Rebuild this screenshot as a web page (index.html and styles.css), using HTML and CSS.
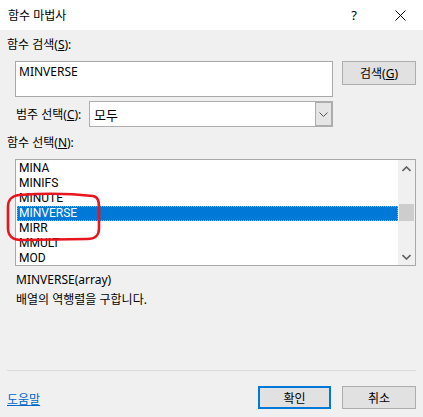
FILE: index.html
```html
<!DOCTYPE html>
<html lang="ko">
<head>
<meta charset="utf-8">
<link rel="stylesheet" href="styles.css">
</head>
<body>
<div class="dialog">
  <div class="titlebar">
    <span class="title">함수 마법사</span>
    <span class="tbtn help">?</span>
    <span class="tbtn close">
      <svg width="11" height="11" viewBox="0 0 11 11"><path d="M0.5 0.5 L10.5 10.5 M10.5 0.5 L0.5 10.5" stroke="#000" stroke-width="1" fill="none"/></svg>
    </span>
  </div>
  <div class="content">
    <div class="label">함수 검색(<u>S</u>):</div>
    <div class="search-row">
      <div class="textbox">MINVERSE</div>
      <div class="btn search-btn">검색(<u>G</u>)</div>
    </div>
    <div class="cat-row">
      <span class="cat-label">범주 선택(<u>C</u>):</span>
      <div class="combo">
        <span class="combo-text">모두</span>
        <span class="combo-btn">
          <svg width="9" height="5" viewBox="0 0 9 5"><path d="M0.5 0.5 L4.5 4.5 L8.5 0.5" stroke="#555" stroke-width="1" fill="none"/></svg>
        </span>
      </div>
    </div>
    <div class="label label-list">함수 선택(<u>N</u>):</div>
    <div class="listbox">
      <div class="items">
        <div class="item">MINA</div>
        <div class="item">MINIFS</div>
        <div class="item">MINUTE</div>
        <div class="item selected">MINVERSE</div>
        <div class="item">MIRR</div>
        <div class="item">MMULT</div>
        <div class="item">MOD</div>
      </div>
      <div class="scrollbar">
        <span class="arrow">
          <svg width="9" height="6" viewBox="0 0 9 6"><path d="M0.5 5 L4.5 1 L8.5 5" stroke="#606060" stroke-width="1.6" fill="none"/></svg>
        </span>
        <span class="track"><span class="thumb"></span></span>
        <span class="arrow">
          <svg width="9" height="6" viewBox="0 0 9 6"><path d="M0.5 1 L4.5 5 L8.5 1" stroke="#606060" stroke-width="1.6" fill="none"/></svg>
        </span>
      </div>
    </div>
    <div class="desc">
      <div class="desc-line">MINVERSE(array)</div>
      <div class="desc-line">배열의 역행렬을 구합니다.</div>
    </div>
    <div class="separator"></div>
    <div class="footer">
      <a class="help-link">도움말</a>
      <div class="btn ok-btn">확인</div>
      <div class="btn cancel-btn">취소</div>
    </div>
  </div>
  <svg class="annotation" width="97" height="51" viewBox="0 0 97 51">
    <path d="M14 3 C40 1 70 2 88 4 C93 5 94 9 94 16 L94 36 C94 44 90 47 82 47 L16 48 C8 48 3 44 3 36 L3 15 C3 7 7 4 14 3 Z" stroke="#e8151f" stroke-width="2.6" fill="none"/>
  </svg>
</div>
</body>
</html>
```

FILE: styles.css
```css
* { box-sizing: border-box; }
html, body { margin: 0; padding: 0; }
body {
  background: #f0f0f0;
  font-family: "Noto Sans", "Noto Sans CJK KR", sans-serif;
  font-size: 12px;
  color: #000;
}
.dialog {
  position: relative;
  width: 423px;
  height: 417px;
  overflow: hidden;
  background: #f0f0f0;
}
.titlebar {
  height: 30px;
  background: #fff;
  display: flex;
  align-items: center;
  padding-left: 8px;
}
.title { flex: 1; font-size: 12px; }
.tbtn {
  width: 46px;
  height: 30px;
  display: flex;
  align-items: center;
  justify-content: center;
}
.help { font-size: 13px; }
.content { padding: 0 7px; }
.label {
  margin-top: 7px;
  line-height: 16px;
  height: 16px;
}
.search-row {
  display: flex;
  align-items: flex-start;
  margin-top: 8px;
  padding-left: 8px;
}
.textbox {
  width: 318px;
  height: 36px;
  background: #fff;
  border: 1px solid #a8a8a8;
  padding: 2px 3px;
  line-height: 16px;
}
.btn {
  background: #e1e1e1;
  border: 1px solid #adadad;
  display: flex;
  align-items: center;
  justify-content: center;
}
.search-btn {
  margin-left: 9px;
  width: 74px;
  height: 24px;
}
.cat-row {
  display: flex;
  align-items: center;
  margin-top: 4px;
  padding-left: 9px;
}
.cat-label { width: 73px; }
.combo {
  width: 244px;
  height: 26px;
  background: #fff;
  border: 1px solid #adadad;
  display: flex;
  align-items: stretch;
}
.combo-text {
  flex: 1;
  display: flex;
  align-items: center;
  padding-left: 4px;
  font-size: 13px;
}
.combo-btn {
  width: 17px;
  background: #e5e5e5;
  border: 1px solid #adadad;
  display: flex;
  align-items: center;
  justify-content: center;
}
.label-list { margin-top: 8px; }
.listbox {
  margin-top: 8px;
  margin-left: 8px;
  width: 401px;
  height: 107px;
  background: #fff;
  border: 1px solid #a8a8a8;
  display: flex;
  overflow: hidden;
}
.items {
  flex: 1;
  padding: 1px 0 0 1px;
  overflow: hidden;
  font-family: Roboto, "Noto Sans", sans-serif;
}
.item {
  height: 15px;
  line-height: 15px;
  padding-left: 2px;
  white-space: nowrap;
}
.selected {
  background: #0078d7;
  color: #fff;
  border: 1px dotted #e8a050;
  padding-left: 1px;
  line-height: 13px;
}
.scrollbar {
  width: 17px;
  background: #f0f0f0;
  display: flex;
  flex-direction: column;
}
.arrow {
  height: 17px;
  display: flex;
  align-items: center;
  justify-content: center;
}
.track {
  flex: 1;
  display: flex;
  flex-direction: column;
  padding-top: 27px;
}
.thumb {
  height: 17px;
  margin: 0 1px;
  background: #cdcdcd;
}
.desc {
  margin-top: 4px;
  padding-left: 9px;
}
.desc-line {
  height: 20px;
  line-height: 20px;
}
.separator {
  margin-top: 60px;
  height: 1px;
  background: #dcdcdc;
}
.footer {
  display: flex;
  align-items: center;
  margin-top: 15px;
}
.help-link {
  flex: 1;
  color: #0066cc;
  text-decoration: underline;
  padding-top: 2px;
}
.ok-btn {
  width: 73px;
  height: 23px;
  border: 2px solid #0078d7;
}
.cancel-btn {
  width: 74px;
  height: 23px;
  margin-left: 11px;
}
.annotation {
  position: absolute;
  left: 5px;
  top: 192px;
}
```
